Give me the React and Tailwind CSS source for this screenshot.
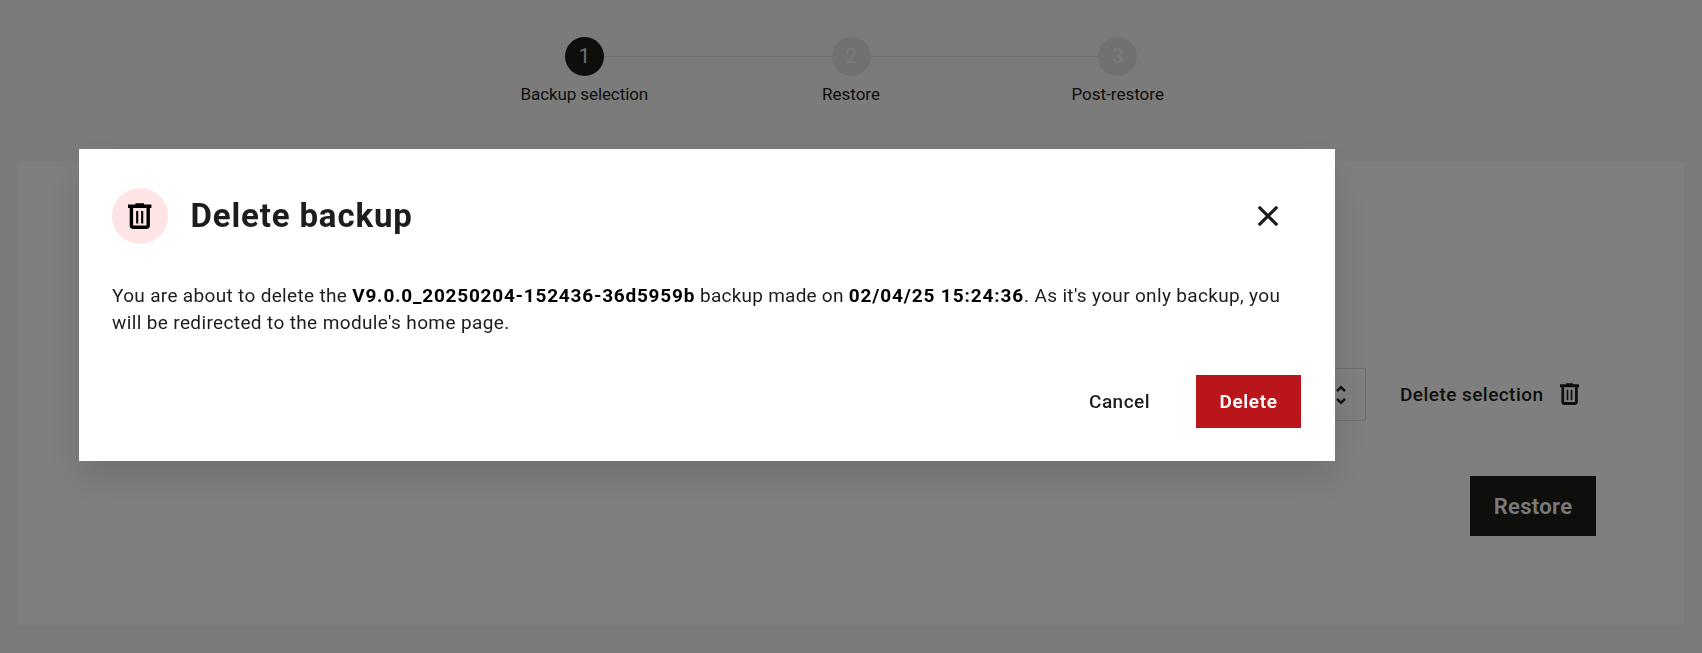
function TrashIcon({ className }) {
  return (
    <svg viewBox="0 0 23.4 26" preserveAspectRatio="none" fill="none" stroke="currentColor" className={className}>
      <path d="M7.4 0.2H16V1.6H23.4V4.9H0V1.6H7.4Z" fill="currentColor" stroke="none" />
      <path d="M3.4 3V22.6Q3.4 24.2 5 24.2H18.6Q20.2 24.2 20.2 22.6V3" strokeWidth="3.4" />
      <path d="M9.2 8V20.4M14.2 8V20.4" strokeWidth="2.1" />
    </svg>
  );
}

function Step({ number, label, labelClass, active }) {
  return (
    <li className="flex w-[266.7px] flex-col items-center">
      <span
        className={
          active
            ? "z-10 flex h-[39px] w-[39px] items-center justify-center rounded-full bg-[#1d1d1b] text-[20px] text-[#e0e0e0]"
            : "z-10 flex h-[39px] w-[39px] items-center justify-center rounded-full bg-[#e2e2e2] text-[20px] text-[#f8f8f8]"
        }
      >
        {number}
      </span>
      <span className={`mt-[7px] whitespace-nowrap text-[17px] leading-[22px] ${labelClass}`}>{label}</span>
    </li>
  );
}

function Stepper() {
  return (
    <div className="relative flex h-[162px] justify-center pt-[36.5px]">
      <div className="absolute left-[585px] top-[56px] h-px w-[533px] bg-[#dadada]" />
      <ol className="flex">
        <Step number="1" label="Backup selection" labelClass="tracking-[-0.1px]" active />
        <Step number="2" label="Restore" labelClass="tracking-[0px]" />
        <Step number="3" label="Post-restore" labelClass="tracking-[0px]" />
      </ol>
    </div>
  );
}

function BackupPanel() {
  return (
    <section className="ml-[17px] mr-[18px] flex h-[463px] flex-col bg-white pr-[88px] pt-[206px]">
      <div className="flex items-center pl-[88px]">
        <div className="flex h-[53px] w-[1261px] items-center justify-end border border-[#dadada] pr-[19px]">
          <svg viewBox="0 0 10 20" className="h-5 w-2.5" fill="none" stroke="#1d1d1b" strokeWidth="2.4">
            <path d="M1 6.2L5 2.2L9 6.2M1 13.8L5 17.8L9 13.8" />
          </svg>
        </div>
        <button className="ml-[34px] flex items-center whitespace-nowrap text-[19px] font-medium text-[#1d1d1b]">
          <span className="w-[143px] pt-px tracking-[0.45px]">Delete selection</span>
          <TrashIcon className="mb-px ml-[17px] h-[22px] w-[19px]" />
        </button>
      </div>
      <button className="mt-[55px] flex h-[60px] w-[126px] items-center justify-center self-end bg-[#1d1d1b] pt-px text-[22px] font-semibold tracking-[0.35px] text-[#f4f4f4]">
        Restore
      </button>
    </section>
  );
}

function DeleteDialog() {
  return (
    <div role="dialog" className="flex h-[312px] w-[1256px] flex-col bg-white pl-[33px] pr-[34px] shadow-[0_17px_35px_rgba(0,0,0,0.12)]">
      <header className="mt-[39px] flex h-[56px] items-center">
        <span className="flex h-[56px] w-[56px] items-center justify-center rounded-full bg-[#ffe4e6]">
          <TrashIcon className="mb-px h-[26px] w-[23.4px] text-black" />
        </span>
        <h2 className="ml-[22.5px] text-[33px] font-bold tracking-[0.85px] text-[#1d1d1b]">Delete backup</h2>
        <button className="ml-auto mr-[23px]">
          <svg viewBox="0 0 20 20" className="h-5 w-5" fill="none" stroke="#1d1d1b" strokeWidth="3.2" strokeLinecap="round">
            <path d="M1.8 1.8L18.2 18.2M18.2 1.8L1.8 18.2" />
          </svg>
        </button>
      </header>
      <p className="mt-[39px] whitespace-nowrap text-[19px] leading-[26.5px] text-[#1d1d1b]">
        <span className="tracking-[0.33px]">You are about to delete the </span>
        <b className="tracking-[0.77px] text-black">V9.0.0_20250204-152436-36d5959b</b>
        <span className="tracking-[0.24px]"> backup made on </span>
        <b className="tracking-[0.89px] text-black">02/04/25 15:24:36</b>
        <span className="tracking-[0.33px]">. As it's your only backup, you</span>
        <br />
        <span className="tracking-[0.37px]">will be redirected to the module's home page.</span>
      </p>
      <footer className="mt-auto mb-[33px] flex items-center justify-end text-[19px]">
        <button className="mr-[46px] w-[61px] pt-px font-medium tracking-[0.45px] text-[#1d1d1b]">Cancel</button>
        <button className="h-[53px] w-[105px] bg-[#ba151a] pt-px font-semibold tracking-[0.6px] text-white">Delete</button>
      </footer>
    </div>
  );
}

export default function App() {
  return (
    <div className="h-[653px] w-[1702px] overflow-hidden bg-[#f6f6f6] font-['Roboto','Liberation_Sans',sans-serif] text-[#1d1d1b]">
      <Stepper />
      <BackupPanel />
      <div className="fixed inset-0 z-20 bg-black/50 pl-[79px] pt-[149px]">
        <DeleteDialog />
      </div>
    </div>
  );
}
